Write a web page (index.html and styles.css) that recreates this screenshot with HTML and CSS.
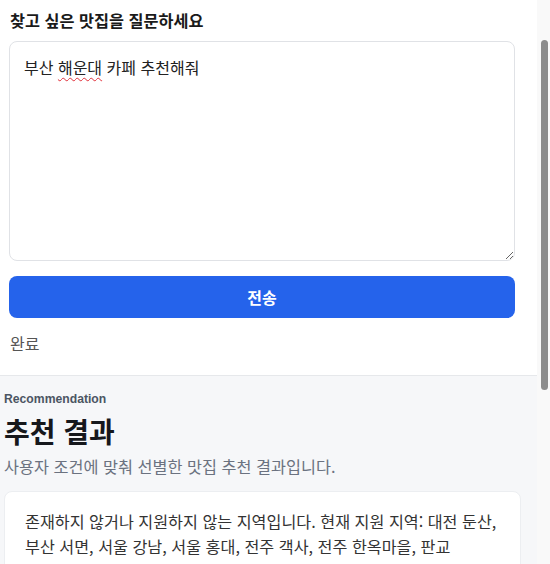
FILE: index.html
```html
<!DOCTYPE html>
<html lang="ko">
<head>
<meta charset="utf-8">
<title>맛집 추천</title>
<link rel="stylesheet" href="styles.css">
</head>
<body>
<div class="page">
  <section class="ask">
    <h2 class="ask-title">찾고 싶은 맛집을 질문하세요</h2>
    <div class="textarea" role="textbox" contenteditable="true">부산 <span class="misspell">해운대</span> 카페 추천해줘</div>
    <button class="send" type="button">전송</button>
    <p class="status">완료</p>
  </section>
  <section class="result">
    <p class="eyebrow">Recommendation</p>
    <h1 class="result-title">추천 결과</h1>
    <p class="result-sub">사용자 조건에 맞춰 선별한 맛집 추천 결과입니다.</p>
    <div class="card">
      <p class="card-text">존재하지 않거나 지원하지 않는 지역입니다. 현재 지원 지역: 대전 둔산, 부산 서면, 서울 강남, 서울 홍대, 전주 객사, 전주 한옥마을, 판교</p>
    </div>
  </section>
</div>
<div class="scroll-track"><div class="scroll-thumb"></div></div>
</body>
</html>
```
FILE: styles.css
```css
html, body {
  margin: 0;
  padding: 0;
  height: 100%;
  overflow: hidden;
}
body {
  background: #f6f7f9;
  font-family: "Noto Sans CJK KR", "Noto Sans", sans-serif;
  color: #1f2328;
}
.page {
  margin-right: 13px;
  min-height: 100%;
}
.ask {
  background: #ffffff;
  padding: 8px 22px 20px 9px;
  border-bottom: 1px solid #e6e8eb;
}
.ask-title {
  margin: 0;
  padding-left: 1px;
  font-size: 16.3px;
  line-height: 24px;
  font-weight: 700;
  color: #1a1a1a;
}
.textarea {
  margin-top: 9px;
  box-sizing: border-box;
  height: 220px;
  border: 1px solid #e0e2e6;
  border-radius: 8px;
  padding: 13px 14px;
  font-size: 16px;
  line-height: 24px;
  color: #222;
  resize: vertical;
  overflow: auto;
  outline: none;
  background: #fff;
}
.misspell {
  text-decoration: underline wavy #e0303a;
  text-decoration-thickness: 1px;
  text-underline-offset: 3px;
}
.send {
  display: block;
  width: 100%;
  margin-top: 15px;
  height: 42px;
  border: 0;
  border-radius: 8px;
  background: #2563eb;
  color: #fff;
  font-family: "Noto Sans CJK KR", "Noto Sans", sans-serif;
  font-size: 16px;
  font-weight: 700;
  cursor: pointer;
}
.status {
  margin: 13px 0 0;
  padding-left: 1px;
  font-size: 16px;
  line-height: 24px;
  color: #555;
}
.result {
  padding: 15px 16px 20px 4px;
}
.eyebrow {
  margin: 0;
  font-family: "Liberation Sans", Arial, sans-serif;
  font-size: 12.2px;
  line-height: 16px;
  font-weight: 700;
  color: #4b5563;
}
.result-title {
  margin: 6px 0 0;
  font-size: 28px;
  line-height: 36px;
  font-weight: 700;
  color: #16181c;
}
.result-sub {
  margin: 5px 0 0;
  font-size: 16.3px;
  line-height: 24px;
  color: #6b7280;
}
.card {
  margin-top: 13px;
  background: #fff;
  border: 1px solid #eceef1;
  border-radius: 8px;
  padding: 17px 20px 20px;
}
.card-text {
  margin: 0;
  font-size: 16.2px;
  line-height: 25px;
  color: #333;
}
.scroll-track {
  position: fixed;
  top: 0;
  right: 0;
  width: 13px;
  height: 100%;
  background: #f9f9f9;
}
.scroll-thumb {
  position: absolute;
  top: 40px;
  left: 4px;
  width: 7px;
  height: 350px;
  border-radius: 4px;
  background: #8c8c8c;
}
```
